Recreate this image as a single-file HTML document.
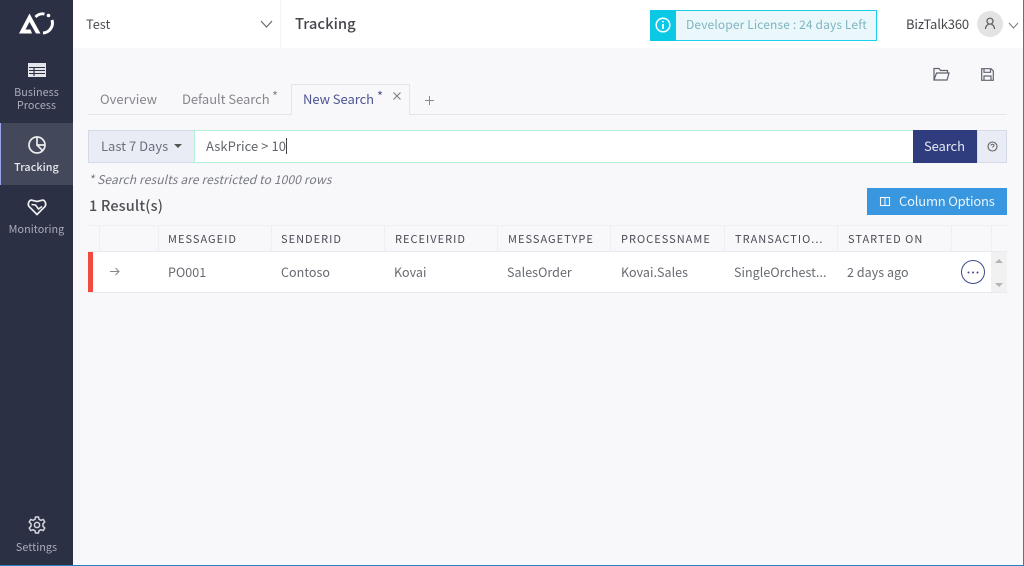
<!DOCTYPE html>
<html><head><meta charset="utf-8"><style>
html,body{margin:0;padding:0}
body{width:1024px;height:566px;overflow:hidden;position:relative;background:#f8f8fb;font-family:"Noto Sans CJK JP","Liberation Sans",sans-serif}
.t{position:absolute;white-space:nowrap;line-height:16px}
.b{position:absolute}
svg{position:absolute;overflow:visible}
.th{font-size:11px;letter-spacing:1.02px;color:#4a4c55;top:231px}
.td{font-size:12.5px;color:#666a70;top:264px;letter-spacing:.05px}
.nav{font-size:10.8px;color:#a9adba;left:0;width:73px;text-align:center;letter-spacing:.05px}
.sep{position:absolute;top:226px;width:1px;height:26px;background:#eeeef3}
</style></head><body>
<div class="b" style="left:73px;top:0;width:951px;height:48px;background:#fff"></div>
<div class="b" style="left:280px;top:0;width:1px;height:48px;background:#f3f3f6"></div>
<div class="b" style="left:0;top:0;width:73px;height:566px;background:#2c3044"></div>
<div class="b" style="left:0;top:123px;width:73px;height:62px;background:#44485b"></div>
<div class="b" style="left:0;top:123px;width:1px;height:62px;background:#9aa4ee"></div>

<svg style="left:19px;top:12px" width="36" height="24" viewBox="0 0 36 24" fill="none">
<path d="M0 21.500 L10.500 1.500 L21.500 21.500 L17 21.500 L10.500 10 L6.500 17.500 L11.500 17.500 L13 21.500 Z" fill="#fff"/>
<path d="M16.500 5 A10 10 0 0 1 25.500 2" stroke="#fff" stroke-width="2.800"/>
<path d="M33 8 A10 10 0 0 1 24 21" stroke="#fff" stroke-width="3"/>
<circle cx="29.500" cy="3.500" r="1.800" fill="#fff"/>
</svg>
<svg style="left:28px;top:63px" width="18" height="14" viewBox="0 0 18 14">
<rect x="0" y="0" width="18" height="14" fill="#e4e5ea"/>
<path d="M1 4.500H17M1 7.500H17M1 10.500H17" stroke="#2c3044" stroke-width="1"/>
<path d="M6 4V13" stroke="#2c3044" stroke-width="1.200"/>
</svg>
<div class="t nav" style="top:84px">Business</div>
<div class="t nav" style="top:97px">Process</div>
<svg style="left:27px;top:135px" width="20" height="20" viewBox="0 0 20 20" fill="none" stroke="#eceded" stroke-width="1.700">
<circle cx="10" cy="10" r="8"/><path d="M10 2V10H18"/><path d="M10 10L15.500 15.500"/>
</svg>
<div class="t nav" style="top:159px;color:#e8e9ee;font-weight:500">Tracking</div>
<svg style="left:27px;top:198px" width="20" height="18" viewBox="0 0 20 18" fill="none" stroke="#eceded" stroke-width="1.700">
<path d="M10 16.500L2 8.500C.5 6.500 1.500 3 4 2L10 3.500L16 2C18.500 3 19.500 6.500 18 8.500Z"/>
<path d="M4.500 6.500L8.500 7L11.500 11L15 8.500" stroke-width="1.600"/>
</svg>
<div class="t nav" style="top:221px">Monitoring</div>
<svg style="left:28px;top:516px" width="18" height="18" viewBox="0 0 18 18" fill="none" stroke="#d5d7dd" stroke-width="1.500">
<path d="M7.500 1H10.500L11 3.300L13 4.300L15.200 3.400L16.800 6L15 7.700V10.300L16.800 12L15.200 14.600L13 13.700L11 14.700L10.500 17H7.500L7 14.700L5 13.700L2.800 14.600L1.200 12L3 10.300V7.700L1.200 6L2.800 3.400L5 4.300L7 3.300Z" stroke-linejoin="round"/>
<circle cx="9" cy="9" r="2.600"/>
</svg>
<div class="t nav" style="top:539px">Settings</div>

<div class="t" style="left:86px;top:16px;font-size:12.800px;color:#4d4f55">Test</div>
<svg style="left:260px;top:20px" width="13" height="8" fill="none" stroke="#666" stroke-width="1.100"><path d="M1 1L6.500 7L12 1"/></svg>
<div class="t" style="left:295px;top:16px;font-size:14.800px;color:#44464c;font-weight:500">Tracking</div>

<div class="b" style="left:650px;top:10px;width:227px;height:31px;box-sizing:border-box;border:1px solid #1bd0ea;background:#ebf8fb"></div>
<div class="b" style="left:650px;top:10px;width:26px;height:31px;background:#0bc9e5"></div>
<svg style="left:655px;top:17px" width="16" height="16" fill="none" stroke="#fff" stroke-width="1.500"><circle cx="8" cy="8" r="6.800"/><path d="M8 7V12" stroke-width="1.700"/><circle cx="8" cy="4.600" r=".9" fill="#fff" stroke="none"/></svg>
<div class="t" style="left:686px;top:17px;font-size:12px;color:#7fb3c0;letter-spacing:.13px">Developer License : 24 days Left</div>
<div class="t" style="left:906px;top:16px;font-size:13px;color:#45474c;letter-spacing:-.15px">BizTalk360</div>
<div class="b" style="left:977px;top:11px;width:26px;height:26px;border-radius:50%;background:#e3e3e3"></div>
<svg style="left:984px;top:17px" width="12" height="13" fill="none" stroke="#55575c" stroke-width="1.200"><circle cx="6" cy="4.200" r="3"/><path d="M1.500 12C1.500 9 3.500 7.500 4.500 7.500M10.500 12C10.500 9 8.500 7.500 7.500 7.500"/></svg>
<svg style="left:1008px;top:22px" width="11" height="7" fill="none" stroke="#777" stroke-width="1"><path d="M1 1L5.500 6L10 1"/></svg>

<svg style="left:933px;top:67px" width="17" height="14" fill="none" stroke="#5f636e" stroke-width="1.200"><path d="M1 13V1.500H6L7.500 3.500H14.500V6"/><path d="M1 13H14L16 6H3.500L1 13Z"/></svg>
<svg style="left:981px;top:68px" width="13" height="13" fill="none" stroke="#5f636e" stroke-width="1.200"><path d="M.7.700H10L12.300 3V12.300H.7Z"/><path d="M3 1V4.300H9.500V1M3 12V8H10V12"/></svg>

<div class="b" style="left:88px;top:114px;width:919px;height:1px;background:#e4e5ec"></div>
<div class="t" style="left:100px;top:91px;font-size:13px;color:#85878c">Overview</div>
<div class="t" style="left:182px;top:91px;font-size:13px;color:#85878c;letter-spacing:-.05px">Default Search</div>
<div class="t" style="left:272px;top:88px;font-size:13px;color:#85878c">*</div>
<div class="b" style="left:291px;top:84px;width:119px;height:31px;box-sizing:border-box;background:#f8f8fb;border:1px solid #e4e5ec;border-bottom:none"></div>
<div class="t" style="left:303px;top:91px;font-size:13px;color:#4c5590;letter-spacing:-.05px">New Search</div>
<div class="t" style="left:377px;top:88px;font-size:13px;color:#4c5590">*</div>
<svg style="left:393px;top:92px" width="8" height="8" stroke="#777" stroke-width="1"><path d="M.5.500L7.500 7.500M7.500.500L.5 7.500"/></svg>
<svg style="left:425px;top:96px" width="9" height="9" stroke="#888" stroke-width="1"><path d="M4.500 0V9M0 4.500H9"/></svg>

<div class="b" style="left:88px;top:130px;width:107px;height:33px;box-sizing:border-box;background:#e9ecf5;border:1px solid #d5daea"></div>
<div class="t" style="left:101px;top:138px;font-size:13px;color:#6c6f78">Last 7 Days</div>
<div class="b" style="left:174px;top:144px;width:0;height:0;border-left:4px solid transparent;border-right:4px solid transparent;border-top:4px solid #555"></div>
<div class="b" style="left:194px;top:130px;width:719px;height:33px;box-sizing:border-box;background:#fff;border:1px solid #b4f0d8;border-right:none"></div>
<div class="t" style="left:206px;top:138px;font-size:13px;color:#62656b;letter-spacing:.05px">AskPrice &gt; 10</div>
<div class="b" style="left:286px;top:138px;width:1px;height:16px;background:#444"></div>
<div class="b" style="left:913px;top:130px;width:64px;height:33px;background:#2f3d7e"></div>
<div class="t" style="left:924px;top:138px;font-size:13px;color:#e6e8f2;letter-spacing:-.1px">Search</div>
<div class="b" style="left:977px;top:130px;width:30px;height:33px;box-sizing:border-box;background:#e9ecf5;border:1px solid #d5daea"></div>
<svg style="left:987px;top:141px" width="11" height="11" fill="none" stroke="#666" stroke-width="1.100"><circle cx="5.500" cy="5.500" r="4.500"/><path d="M4 4.500C4 2.800 7 2.800 7 4.500C7 5.500 5.500 5.500 5.500 6.500" stroke-width="1"/></svg>

<div class="t" style="left:88.500px;top:172px;font-size:12px;font-style:italic;color:#787a82;letter-spacing:.14px">* Search results are restricted to 1000 rows</div>
<div class="t" style="left:89px;top:198px;font-size:14.500px;color:#4e5056;letter-spacing:.15px;font-weight:500">1 Result(s)</div>
<div class="b" style="left:867px;top:188px;width:140px;height:27px;background:#3997e0"></div>
<svg style="left:880px;top:197px" width="10" height="9" fill="none" stroke="#f0f7fd" stroke-width="1.100"><rect x=".5" y=".5" width="9" height="8"/><path d="M5 .5V8.500"/></svg>
<div class="t" style="left:899px;top:193px;font-size:13px;color:#eaf4fc;letter-spacing:-.2px">Column Options</div>

<div class="b" style="left:88px;top:225px;width:919px;height:1px;background:#eeeef3"></div>
<div class="b" style="left:88px;top:251px;width:919px;height:1px;background:#e8e8ef"></div>
<div class="sep" style="left:99px"></div><div class="sep" style="left:158px"></div><div class="sep" style="left:271px"></div><div class="sep" style="left:384px"></div><div class="sep" style="left:497px"></div><div class="sep" style="left:610px"></div><div class="sep" style="left:724px"></div><div class="sep" style="left:837px"></div><div class="sep" style="left:951px"></div><div class="sep" style="left:991px"></div>
<div class="t th" style="left:168px">MESSAGEID</div>
<div class="t th" style="left:281px">SENDERID</div>
<div class="t th" style="left:395px">RECEIVERID</div>
<div class="t th" style="left:508px">MESSAGETYPE</div>
<div class="t th" style="left:621px">PROCESSNAME</div>
<div class="t th" style="left:735px">TRANSACTIO...</div>
<div class="t th" style="left:848px">STARTED ON</div>

<div class="b" style="left:88px;top:252px;width:903px;height:41px;background:#fff"></div>
<div class="b" style="left:88px;top:292px;width:919px;height:1px;background:#e8e8ef"></div>
<div class="b" style="left:88px;top:252px;width:5px;height:40px;background:#f04b40"></div>
<svg style="left:110px;top:267px" width="10" height="9" fill="none" stroke="#888" stroke-width="1"><path d="M0 4.500H9M5.500 1L9 4.500L5.500 8"/></svg>
<div class="t td" style="left:168px">PO001</div>
<div class="t td" style="left:281px">Contoso</div>
<div class="t td" style="left:394px">Kovai</div>
<div class="t td" style="left:507px">SalesOrder</div>
<div class="t td" style="left:621px">Kovai.Sales</div>
<div class="t td" style="left:734px">SingleOrchest...</div>
<div class="t td" style="left:847px">2 days ago</div>
<div class="b" style="left:961px;top:260px;width:24px;height:24px;box-sizing:border-box;border:1.200px solid #3f4a8a;border-radius:50%;background:#fff"></div>
<svg style="left:967px;top:271px" width="12" height="3" fill="#3f4a8a"><circle cx="1.500" cy="1.500" r="1"/><circle cx="6" cy="1.500" r="1"/><circle cx="10.500" cy="1.500" r="1"/></svg>
<div class="b" style="left:991px;top:252px;width:16px;height:40px;background:#f1f1f1"></div>
<div class="b" style="left:995px;top:259px;width:0;height:0;border-left:4px solid transparent;border-right:4px solid transparent;border-bottom:4px solid #b5b5b5"></div>
<div class="b" style="left:995px;top:283px;width:0;height:0;border-left:4px solid transparent;border-right:4px solid transparent;border-top:4px solid #b5b5b5"></div>

<div class="b" style="left:1023px;top:0;width:1px;height:566px;background:#2a80c4"></div>
<div class="b" style="left:0;top:565px;width:1024px;height:1px;background:#2a80c4"></div>
</body></html>
